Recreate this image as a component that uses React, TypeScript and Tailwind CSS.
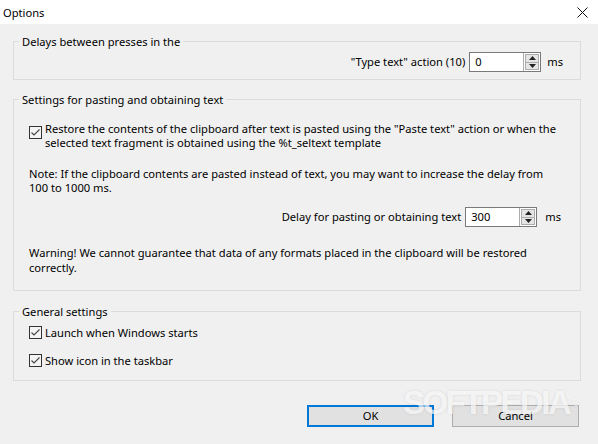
import React from 'react';

const font = { fontFamily: '"Noto Sans", "Open Sans", sans-serif' };

function CheckBox() {
  return (
    <span className="inline-flex h-[13px] w-[13px] shrink-0 items-center justify-center border border-[#333333] bg-[#f4f4f4]">
      <svg width="11" height="11" viewBox="0 0 11 11">
        <path d="M1.5 5.5 L4 8 L9.5 2.5" fill="none" stroke="#444" strokeWidth="1.1" />
      </svg>
    </span>
  );
}

function Spin({ value }: { value: string }) {
  return (
    <div className="flex h-[20px] w-[72px] border border-[#7a7a7a] bg-white">
      <div className="flex-1 pl-[5px] leading-[18px]">{value}</div>
      <div className="flex w-[17px] flex-col border-l border-[#adadad] bg-white p-[1px]">
        <div className="flex flex-1 items-center justify-center border border-[#adadad] bg-[#e5e5e5]">
          <svg width="7" height="4" viewBox="0 0 7 4">
            <path d="M0 4 L3.5 0 L7 4 Z" fill="#222" />
          </svg>
        </div>
        <div className="flex flex-1 items-center justify-center border border-t-0 border-[#adadad] bg-[#e5e5e5]">
          <svg width="7" height="4" viewBox="0 0 7 4">
            <path d="M0 0 L3.5 4 L7 0 Z" fill="#222" />
          </svg>
        </div>
      </div>
    </div>
  );
}

export default function App() {
  return (
    <div className="relative h-[444px] w-[598px] overflow-hidden bg-[#f0f0f0] text-[11.15px] text-black" style={font}>
      {/* title bar */}
      <div className="flex h-[24px] items-center justify-between bg-white pl-[3px] pr-[10px]">
        <span className="leading-[15px]">Options</span>
        <svg width="11" height="11" viewBox="0 0 11 11">
          <path d="M0.5 0.5 L10.5 10.5 M10.5 0.5 L0.5 10.5" stroke="#111" strokeWidth="1" />
        </svg>
      </div>

      <div className="flex flex-col whitespace-nowrap pl-[13px] pr-[17px]">
        {/* delays */}
        <fieldset className="mt-[10px] border border-[#dcdcdc] pb-[7px] pl-[15px] pr-[17px]">
          <legend className="-ml-[10px] px-[3px] leading-[15px]">Delays between presses in the</legend>
          <div className="mt-[3px] flex items-center justify-end">
            <span className="mr-[4px]">"Type text" action (10)</span>
            <Spin value="0" />
            <span className="ml-[6px]">ms</span>
          </div>
        </fieldset>

        {/* pasting */}
        <fieldset className="mt-[12px] border border-[#dcdcdc] pb-[15px] pl-[15px] pr-[17px]">
          <legend className="-ml-[10px] px-[3px] leading-[15px]">Settings for pasting and obtaining text</legend>
          <div className="mt-[15px] flex items-start gap-[3px]">
            <div className="mt-[4px]">
              <CheckBox />
            </div>
            <p className="leading-[14px]">
              Restore the contents of the clipboard after text is pasted using the "Paste text" action or when the
              <br />
              selected text fragment is obtained using the %t_seltext template
            </p>
          </div>
          <p className="mt-[17px] leading-[14px]">
            Note: If the clipboard contents are pasted instead of text, you may want to increase the delay from
            <br />
            100 to 1000 ms.
          </p>
          <div className="mt-[12px] flex items-center justify-end pr-[2px]">
            <span className="mr-[4px]">Delay for pasting or obtaining text</span>
            <Spin value="300" />
            <span className="ml-[8px]">ms</span>
          </div>
          <p className="mt-[18px] leading-[15px]">
            Warning! We cannot guarantee that data of any formats placed in the clipboard will be restored
            <br />
            correctly.
          </p>
        </fieldset>

        {/* general */}
        <fieldset className="mt-[13px] border border-[#dcdcdc] pb-[12px] pl-[15px] pr-[17px]">
          <legend className="-ml-[10px] px-[3px] leading-[15px]">General settings</legend>
          <div className="mt-[6px] flex items-center gap-[3px] leading-[15px]">
            <CheckBox />
            <span>Launch when Windows starts</span>
          </div>
          <div className="mt-[13px] flex items-center gap-[3px] leading-[15px]">
            <CheckBox />
            <span>Show icon in the taskbar</span>
          </div>
        </fieldset>

        {/* buttons */}
        <div className="mt-[24px] flex justify-end gap-[18px] pr-[2px]">
          <button className="h-[22px] w-[127px] border-2 border-[#0078d7] bg-[#e1e1e1] leading-[18px]">OK</button>
          <button className="h-[22px] w-[127px] border border-[#adadad] bg-[#e1e1e1] leading-[20px]">Cancel</button>
        </div>
      </div>

      {/* watermark */}
      <div
        className="pointer-events-none absolute left-[403px] top-[385px] text-[33px] font-bold leading-[36px] tracking-[-2.5px] text-white/70 [text-shadow:0_0_3px_rgba(0,0,0,0.1)]"
        style={{ fontFamily: '"Liberation Sans", Arial, sans-serif' }}
      >
        SOFTPEDIA
        <span className="ml-[3px] align-top text-[10px] tracking-normal">®</span>
      </div>
    </div>
  );
}
